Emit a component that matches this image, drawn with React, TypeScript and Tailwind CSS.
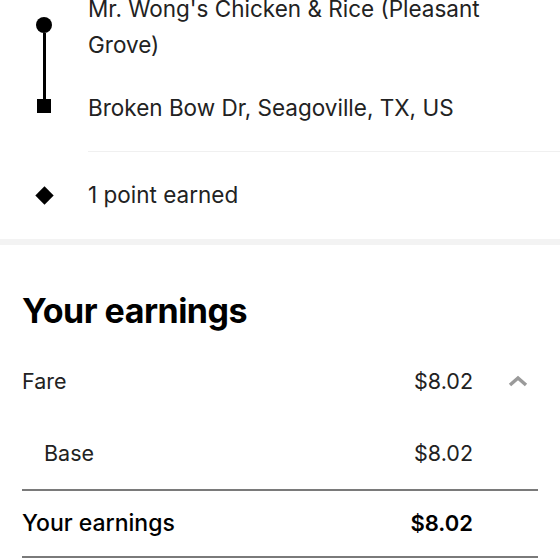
import React from "react";

export default function App() {
  return (
    <div
      className="w-[560px] h-[560px] overflow-hidden bg-white text-[#222]"
      style={{ fontFamily: "Inter, 'Liberation Sans', sans-serif" }}
    >
      {/* Route section */}
      <div className="relative">
        <div className="flex -mt-[9px]">
          <div className="w-[88px] shrink-0 flex flex-col items-center pt-[26px]">
            <div className="w-4 h-4 rounded-full bg-black" />
            <div className="w-[3px] h-[66px] bg-black" />
            <div className="w-[14px] h-[14px] bg-black" />
          </div>
          <div className="w-[425px] text-[22.5px] leading-[36px]">
            <div>Mr. Wong's Chicken &amp; Rice (Pleasant Grove)</div>
            <div className="mt-[27px]">Broken Bow Dr, Seagoville, TX, US</div>
          </div>
        </div>
        <div className="ml-[88px] mt-[25px] h-px bg-[#f0f0f0]" />
        <div className="flex items-center h-[86px]">
          <div className="w-[88px] shrink-0 flex justify-center">
            <div className="w-[13px] h-[13px] bg-black rotate-45" />
          </div>
          <div className="text-[22.5px] leading-[36px]">1 point earned</div>
        </div>
      </div>
      <div className="h-[6px] bg-[#f3f3f3] mt-[1px]" />

      {/* Earnings */}
      <div className="px-[22px]">
        <h2 className="text-[34px] leading-[40px] font-bold text-black mt-[46px] tracking-[-0.5px]">
          Your earnings
        </h2>
        <div className="mt-[14px] flex items-center h-[72px] text-[21.5px]">
          <div className="flex-1">Fare</div>
          <div>$8.02</div>
          <div className="w-[65px] flex justify-end pr-[10px]">
            <svg width="20" height="12" viewBox="0 0 20 12">
              <path d="M2 10 L10 3 L18 10" fill="none" stroke="#9a9a9a" strokeWidth="3.5" strokeLinejoin="miter" />
            </svg>
          </div>
        </div>
        <div className="flex items-center h-[74px] text-[21.5px] border-b-2 border-[#7a7a7a]">
          <div className="flex-1 pl-[22px]">Base</div>
          <div>$8.02</div>
          <div className="w-[65px]" />
        </div>
        <div className="flex items-center h-[67px] border-b-2 border-[#7a7a7a]">
          <div className="flex-1 font-medium text-black text-[23px]">Your earnings</div>
          <div className="font-semibold text-black text-[22px]">$8.02</div>
          <div className="w-[65px]" />
        </div>
      </div>
    </div>
  );
}
